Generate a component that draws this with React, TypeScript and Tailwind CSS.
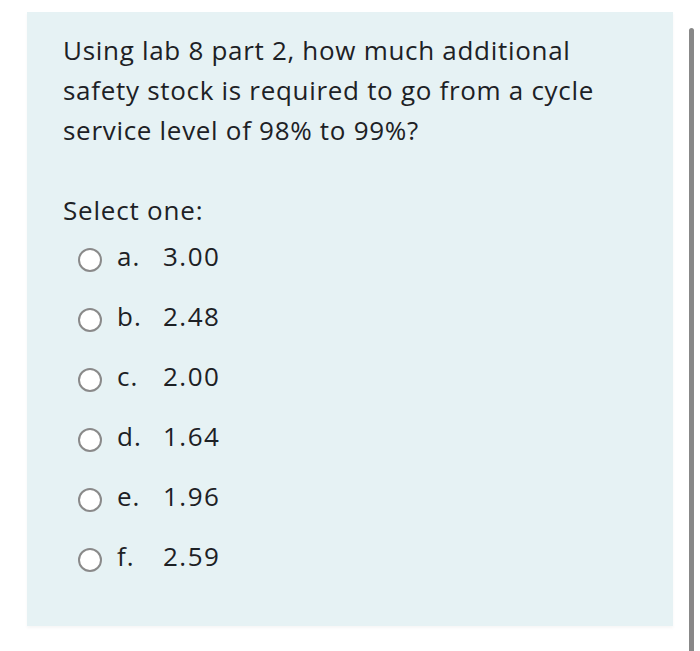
const OPTIONS = [
  { letter: 'a.', value: '3.00' },
  { letter: 'b.', value: '2.48' },
  { letter: 'c.', value: '2.00' },
  { letter: 'd.', value: '1.64' },
  { letter: 'e.', value: '1.96' },
  { letter: 'f.', value: '2.59' },
];

export default function App() {
  return (
    <div className="relative w-[700px] h-[651px] bg-white overflow-hidden font-['Open_Sans','Lato',sans-serif] text-[#1d2125]">
      {/* Question panel */}
      <div className="ml-[27px] mt-[12px] w-[646px] bg-[#e6f2f4] pl-[36px] pr-[20px] pt-[18px] pb-[40px] shadow-[0_2px_3px_rgba(0,0,0,0.04)]">
        <p className="text-[26px] leading-[40px] tracking-[0.7px]">
          Using lab 8 part 2, how much additional
          <br />
          safety stock is required to go from a cycle
          <br />
          service level of 98% to 99%?
        </p>

        <p className="mt-[44px] text-[26px] leading-[32px] tracking-[0.8px]">Select one:</p>

        <div className="flex flex-col">
          {OPTIONS.map((o) => (
            <label key={o.letter} className="flex h-[60px] items-center pl-[15px]">
              <span className="mt-[8px] h-[24px] w-[24px] shrink-0 rounded-full border-[2.5px] border-[#8a8a8a] bg-white" />
              <span className="ml-[15px] w-[46px] text-[26px] leading-none tracking-[1px]">{o.letter}</span>
              <span className="text-[26px] leading-none tracking-[1.5px]">{o.value}</span>
            </label>
          ))}
        </div>
      </div>

      {/* Scrollbar */}
      <div className="absolute left-[689px] top-[28px] h-[640px] w-[5px] rounded-t-full bg-[#888888]" />
    </div>
  );
}
